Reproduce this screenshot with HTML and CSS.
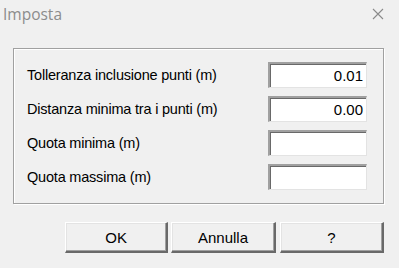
FILE: index.html
```html
<!DOCTYPE html>
<html>
<head>
<meta charset="utf-8">
<link rel="stylesheet" href="styles.css">
</head>
<body>
<div class="window">
  <div class="titlebar">
    <span class="title">Imposta</span>
    <svg class="close" width="12" height="12" viewBox="0 0 12 12"><path d="M1 1 L11 11 M11 1 L1 11" stroke="#8a8a8a" stroke-width="1.1" fill="none"/></svg>
  </div>
  <div class="content">
    <div class="group">
      <div class="row"><span class="label">Tolleranza inclusione punti (m)</span><div class="field">0.01</div></div>
      <div class="row"><span class="label">Distanza minima tra i punti (m)</span><div class="field">0.00</div></div>
      <div class="row"><span class="label">Quota minima (m)</span><div class="field"></div></div>
      <div class="row"><span class="label">Quota massima (m)</span><div class="field"></div></div>
    </div>
    <div class="buttons">
      <div class="btn btn-ok">OK</div>
      <div class="btn btn-cancel">Annulla</div>
      <div class="btn btn-help">?</div>
    </div>
  </div>
</div>
</body>
</html>
```
FILE: styles.css
```css
html, body {
  margin: 0;
  padding: 0;
  background: #f0f0f0;
}
.window {
  width: 399px;
  height: 268px;
  background: #f0f0f0;
  box-sizing: border-box;
  font-family: "Liberation Sans", Arial, sans-serif;
  color: #000;
  overflow: hidden;
}
.titlebar {
  height: 32px;
  display: flex;
  align-items: center;
  justify-content: space-between;
  padding: 0 15px 4px 3px;
  box-sizing: border-box;
}
.title {
  font-family: "Open Sans", "Noto Sans", sans-serif;
  font-size: 15.5px;
  color: #8c8c8c;
}
.close {
  display: block;
}
.content {
  padding: 16px 15px 0 13px;
}
.group {
  width: 371px;
  height: 156px;
  box-sizing: border-box;
  border: 1px solid #a0a0a0;
  box-shadow: inset 1px 1px 0 #ffffff, 1px 1px 0 #ffffff;
  padding: 13px 16px 0 13px;
  display: flex;
  flex-direction: column;
  gap: 8px;
}
.row {
  display: flex;
  align-items: center;
  justify-content: space-between;
  height: 26px;
}
.label {
  font-size: 14.5px;
  white-space: nowrap;
  letter-spacing: -0.2px;
}
.field {
  width: 99px;
  height: 26px;
  box-sizing: border-box;
  background: #fff;
  border-top: 2px solid #a0a0a0;
  border-left: 2px solid #a0a0a0;
  border-right: 1px solid #e3e3e3;
  border-bottom: 1px solid #e3e3e3;
  box-shadow: inset 1px 1px 0 #696969;
  text-align: right;
  padding: 3px 3px 0 0;
  font-size: 15px;
  line-height: 18px;
}
.buttons {
  display: flex;
  gap: 3px;
  margin-top: 18px;
  padding-left: 52px;
}
.btn {
  height: 31px;
  box-sizing: border-box;
  background: #f0f0f0;
  border-top: 1px solid #ffffff;
  border-left: 1px solid #ffffff;
  border-right: 2px solid #696969;
  border-bottom: 2px solid #696969;
  box-shadow: inset -1px -1px 0 #a0a0a0, inset 1px 1px 0 #e3e3e3;
  display: flex;
  align-items: center;
  justify-content: center;
  font-size: 15px;
}
.btn-ok { width: 104px; }
.btn-cancel { width: 105px; }
.btn-help { width: 105px; margin-left: 1px; }
```
